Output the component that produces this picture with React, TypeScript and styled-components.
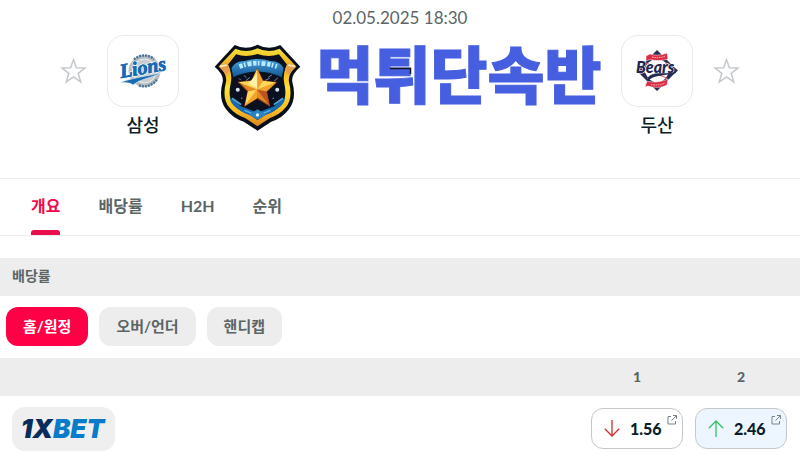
import React, { useState } from "react";
import styled, { createGlobalStyle } from "styled-components";

const sans = `Lato, "Noto Sans CJK KR", sans-serif`;

const GlobalStyle = createGlobalStyle`
  *, *::before, *::after { box-sizing: border-box; }
  body { margin: 0; background: #fff; color: #0b1e28; font-family: ${sans}; }
  button { font: inherit; border: 0; padding: 0; margin: 0; background: none; cursor: pointer; }
  h1, h2, p { margin: 0; }
  svg { display: block; }
`;

const MatchHeader = styled.header`
  min-height: 178px;
  padding: 8px 60px 0;
`;

const Kickoff = styled.time`
  display: block;
  text-align: center;
  font-size: 17px;
  line-height: 20px;
  color: #5b6566;
`;

const Matchup = styled.div`
  display: flex;
  align-items: flex-start;
  padding-top: 7px;
`;

const FavouriteButton = styled.button`
  margin-top: 23px;
`;

const Team = styled.div`
  display: flex;
  flex-direction: column;
  align-items: center;
  gap: 4px;
  margin: 0 20px;
`;

const TeamTile = styled.div`
  display: grid;
  place-items: center;
  width: 72px;
  height: 72px;
  border: 1px solid #e9eaea;
  border-radius: 17px;
`;

const TeamName = styled.p`
  font-size: 18px;
  line-height: 28px;
  font-weight: 500;
`;

const Banner = styled.div`
  flex: 1;
  display: flex;
  justify-content: center;
  gap: 15px;
  padding: 9px 0 0 16px;
  margin: 0 -20px;
`;

const BannerTitle = styled.h1`
  position: relative;
  font-size: 62px;
  line-height: 62px;
  font-weight: 900;
  color: #465fe0;
  -webkit-text-stroke: 1px #465fe0;
  white-space: nowrap;
`;

const BannerMark = styled.svg`
  position: absolute;
  left: 74px;
  top: 23px;
`;

const Tabs = styled.nav`
  display: flex;
  gap: 38px;
  padding: 0 31px;
  border-top: 1px solid #ebecec;
  border-bottom: 1px solid #ebecec;
`;

const Tab = styled.button<{ $active: boolean }>`
  position: relative;
  height: 56px;
  padding-bottom: 4px;
  font-size: 16px;
  font-weight: 700;
  color: ${(p) => (p.$active ? "#f5084b" : "#5b6566")};

  &::after {
    content: "";
    position: absolute;
    inset: auto 0 0;
    height: 5px;
    border-radius: 3px 3px 0 0;
    background: ${(p) => (p.$active ? "#e8104c" : "transparent")};
  }
`;

const SectionTitle = styled.h2`
  margin-top: 22px;
  padding: 0 12px 2px;
  font-size: 14px;
  line-height: 36px;
  font-weight: 700;
  color: #5b6566;
  background: #ededed;
`;

const Markets = styled.div`
  display: flex;
  gap: 11px;
  padding: 11px 6px 12px;
`;

const MarketButton = styled.button<{ $active: boolean }>`
  height: 39px;
  padding: 0 17px 3px;
  border-radius: 12px;
  font-size: 15px;
  font-weight: 700;
  color: ${(p) => (p.$active ? "#fff" : "#5b6566")};
  background: ${(p) => (p.$active ? "#ff0046" : "#ededed")};
`;

const OddsTable = styled.table`
  width: 100%;
  border-collapse: collapse;
  table-layout: fixed;
`;

const HeadRow = styled.tr`
  height: 38px;
  background: #ededed;
  color: #5b6566;
  font-size: 14px;
`;

const HeadCell = styled.th<{ $kind: "bookmaker" | "odd" | "last" }>`
  width: ${(p) => ({ bookmaker: "auto", odd: "104px", last: "111px" })[p.$kind]};
  padding: ${(p) => (p.$kind === "last" ? "0 13px 2px 6px" : "0 6px 2px")};
  font-weight: 900;
`;

const OddsRow = styled.tr`
  height: 65px;
`;

const Cell = styled.td<{ $last?: boolean; $first?: boolean }>`
  padding: ${(p) => (p.$last ? "0 13px 0 6px" : p.$first ? "0 12px" : "0 6px")};
`;

const Bookmaker = styled.a`
  display: flex;
  align-items: center;
  justify-content: center;
  width: 103px;
  height: 44px;
  padding-right: 2px;
  border-radius: 13px;
  background: #efefef;
  text-decoration: none;
  font: italic 900 26px/44px Inter, sans-serif;
  color: #087bc9;
`;

const BookmakerLead = styled.span`
  color: #082c5c;
`;

const OddButton = styled.button<{ $tinted: boolean }>`
  position: relative;
  display: flex;
  align-items: center;
  gap: 10px;
  width: 100%;
  height: 41px;
  padding-left: 12px;
  border: 1px solid #c4c8ca;
  border-radius: 12px;
  font-size: 16px;
  font-weight: 900;
  color: #0b1e28;
  background: ${(p) => (p.$tinted ? "#edf6ff" : "#fff")};
`;

const ExternalMark = styled.svg`
  position: absolute;
  top: 6px;
  right: 5px;
`;

function StarIcon() {
  return (
    <svg width="27" height="26" viewBox="0 0 27 26" fill="none" stroke="#c3c8ca" strokeWidth="1.5" aria-hidden="true">
      <path d="M13.5 1.8 16.4 9.8 25 10.1 18.2 15.3 20.7 23.8 13.5 18.8 6.3 23.8 8.8 15.3 2 10.1 10.6 9.8Z" />
    </svg>
  );
}

function LionsLogo() {
  return (
    <svg width="48" height="40" viewBox="0 0 48 40" role="img" aria-label="Samsung Lions">
      <circle cx="25.5" cy="20" r="14" fill="#c9ccd0" stroke="#b6bbc1" strokeWidth="4" />
      <circle cx="25.5" cy="20" r="12" fill="none" stroke="#fff" strokeWidth=".7" />
      <path d="M15 8.5A15 15 0 0 1 35 8" fill="none" stroke="#47749d" strokeWidth="2.4" strokeDasharray="2 1" />
      <path d="M20 34.5A15 15 0 0 0 38 28" fill="none" stroke="#47749d" strokeWidth="2.4" strokeDasharray="2 1" />
      <text
        x="2"
        y="27"
        transform="rotate(-10 2 27)"
        fontFamily="Liberation Serif, serif"
        fontStyle="italic"
        fontWeight="700"
        fontSize="20"
        fill="#176bb3"
        stroke="#fff"
        strokeWidth="2"
        paintOrder="stroke"
      >
        Lions
      </text>
      <text
        x="2"
        y="27"
        transform="rotate(-10 2 27)"
        fontFamily="Liberation Serif, serif"
        fontStyle="italic"
        fontWeight="700"
        fontSize="20"
        fill="#176bb3"
        stroke="#176bb3"
        strokeWidth=".7"
      >
        Lions
      </text>
      <path d="M0 32C12 27 28 25 42 22 32 27 21 28 14 34 11 31.500 6 31 0 32Z" fill="#176bb3" stroke="#fff" strokeWidth=".5" />
    </svg>
  );
}

function BearsLogo() {
  return (
    <svg width="44" height="44" viewBox="0 0 44 44" role="img" aria-label="Doosan Bears">
      <path d="M22 1 25 4 39 18 43 21.500 39 25 25 39 22 42 19 39 5 25 1 21.500 5 18 19 4Z" fill="#272b55" />
      <path d="M22 7 36.500 21.500 22 36 7.500 21.500Z" fill="#fff" stroke="#a94d68" strokeWidth="1" />
      <circle cx="22" cy="21.500" r="11.500" fill="#fff" />
      <path d="M12 14C16 18 28 18 32 14M12 30C17 25 27 25 32 30" fill="none" stroke="#dd6274" strokeWidth="1.100" />
      <path d="M11 7 15 5C21 7 27 6 32 4L33 10C27 12 20 12 15 10.500L11 12Z" fill="#d92b43" stroke="#fff" strokeWidth=".5" />
      <path d="M17 8.200C22 9 26 8.500 30 7.400" stroke="#f5a9b3" strokeWidth="1.200" strokeDasharray="1.500 .8" fill="none" />
      <path d="M12 32C19 34 26 33 33 30L32 36C27 39 19 39 13 37L10 38Z" fill="#d92b43" stroke="#fff" strokeWidth=".5" />
      <path d="M16 35.500C21 36.500 26 36 30 34" stroke="#f5a9b3" strokeWidth="1.200" strokeDasharray="1.500 .8" fill="none" />
      <text
        x="1"
        y="24"
        fontFamily="Lato, sans-serif"
        fontStyle="italic"
        fontWeight="900"
        fontSize="16"
        fill="#20264f"
        stroke="#fff"
        strokeWidth="1.200"
        paintOrder="stroke"
      >
        Bears
      </text>
      <path d="M41 23.500C29 27 18 25 13 32 11 27 18 24 27 24.500 33 24.500 37 24 41 23.500Z" fill="#20264f" stroke="#20264f" strokeWidth=".6" />
    </svg>
  );
}

function ShieldLogo() {
  return (
    <svg width="87" height="87" viewBox="22 30 260 260" role="img" aria-label="배지">
      <defs>
        <linearGradient id="rim" x1="0" y1="0" x2="0" y2="1">
          <stop offset="0" stopColor="#f4df37" />
          <stop offset=".25" stopColor="#f1a91f" />
          <stop offset=".5" stopColor="#ffe22e" />
          <stop offset=".8" stopColor="#f8bd24" />
          <stop offset="1" stopColor="#dc8420" />
        </linearGradient>
        <linearGradient id="ribbon" x1="0" y1="0" x2="0" y2="1">
          <stop offset="0" stopColor="#4ba5df" />
          <stop offset="1" stopColor="#0e528f" />
        </linearGradient>
      </defs>
      <path d="M84 33Q118 50 152 32Q186 50 220 33L280 98Q252 122 256 143Q270 194 246 225Q226 252 193 262L152 289 111 262Q78 252 58 225Q34 194 48 143Q52 122 24 98Z" fill="#080f1a" />
      <path d="M86 44Q119 59 152 43Q185 59 218 44L268 97Q242 119 246 143Q259 194 236 220Q219 241 188 252L152 276 116 252Q85 241 68 220Q45 194 58 143Q62 119 36 97Z" fill="url(#rim)" />
      <path d="M88 61Q119 71 152 60Q185 71 216 61L240 91Q226 118 232 147Q242 190 223 212Q204 232 178 240L152 257 126 240Q100 232 81 212Q62 190 72 147Q78 118 64 91Z" fill="#0a1020" />
      <path d="M36 97 62 87 70 108 60 122ZM268 97 242 87 234 108 244 122Z" fill="#e89d4b" />
      <path d="M40 97 60 93M264 97 244 93" stroke="#fff1bb" strokeWidth="5" />
      <path d="M72 102Q82 80 112 79Q152 66 192 79Q222 80 232 102L226 132Q152 96 78 132Z" fill="url(#ribbon)" stroke="#071321" strokeWidth="4" />
      <path d="M98 97Q152 78 210 97" fill="none" stroke="#b8eaff" strokeWidth="14" strokeDasharray="10 4 5 6 12 5" />
      <path d="M97 133 102 138M112 124 119 131M184 130 195 122M202 141 213 131M117 140 129 130M174 139 188 133" stroke="#9ba6b5" strokeWidth="2.500" />
      <path d="M69 191Q84 198 102 216L142 231V247Q109 238 88 220 72 210 69 191ZM235 191Q220 198 202 216L162 231V247Q195 238 216 220 232 210 235 191Z" fill="#176bad" />
      <path d="M76 192 103 211M228 192 201 211M113 228 149 244M191 228 155 244" stroke="#54a9e3" strokeWidth="5" />
      <path d="M126 241 152 225 178 241 152 257Z" fill="#2b82bc" />
      <circle cx="152" cy="242" r="5" fill="#e7f6ff" />
      <path d="M151 104 168 140 208 145 179 172 188 215 151 192 114 215 123 172 95 144 135 140Z" fill="#e38a22" stroke="#8a3a15" strokeWidth="3" />
      <path d="M151 104 135 140 95 144 151 166ZM151 166 123 172 114 215ZM151 166 208 145 168 140Z" fill="#ffd85b" />
      <path d="M151 104V166L168 140ZM208 145 151 166 179 172ZM114 215 151 166V192Z" fill="#f2a32c" />
      <path d="M151 166 188 215 179 172Z" fill="#bd5420" />
      <path d="M125 147 151 119V163Z" fill="#fff2a8" />
      <circle cx="93" cy="167" r="6" fill="#d9e3ed" />
      <circle cx="211" cy="167" r="6" fill="#d9e3ed" />
      <circle cx="105" cy="192" r="2" fill="#8ca0b6" />
      <circle cx="199" cy="192" r="2" fill="#8ca0b6" />
    </svg>
  );
}

function TrendArrow({ direction }: { direction: "up" | "down" }) {
  const down = direction === "down";
  return (
    <svg width="16" height="17" viewBox="0 0 16 17" fill="none" stroke={down ? "#cf2e32" : "#32c463"} strokeWidth="1.300" aria-hidden="true">
      <path d={down ? "M8 0V16M.8 8.800 8 16 15.200 8.800" : "M8 17V1M.8 8.200 8 1 15.200 8.200"} />
    </svg>
  );
}

const tabs = ["개요", "배당률", "H2H", "순위"];
const markets = ["홈/원정", "오버/언더", "핸디캡"];
const odds: { value: string; direction: "up" | "down" }[] = [
  { value: "1.56", direction: "down" },
  { value: "2.46", direction: "up" },
];

export default function App() {
  const [tab, setTab] = useState(0);
  const [market, setMarket] = useState(0);

  return (
    <>
      <GlobalStyle />
      <MatchHeader>
        <Kickoff dateTime="2025-05-02T18:30">02.05.2025 18:30</Kickoff>
        <Matchup>
          <FavouriteButton aria-label="삼성 즐겨찾기">
            <StarIcon />
          </FavouriteButton>
          <Team>
            <TeamTile>
              <LionsLogo />
            </TeamTile>
            <TeamName>삼성</TeamName>
          </Team>
          <Banner>
            <ShieldLogo />
            <BannerTitle>
              먹튀단속반
              <BannerMark width="22" height="8" viewBox="0 0 22 8" fill="none" stroke="#101522" strokeWidth="1.500" aria-hidden="true">
                <path d="M0 1.500H20.500V7" />
              </BannerMark>
            </BannerTitle>
          </Banner>
          <Team>
            <TeamTile>
              <BearsLogo />
            </TeamTile>
            <TeamName>두산</TeamName>
          </Team>
          <FavouriteButton aria-label="두산 즐겨찾기">
            <StarIcon />
          </FavouriteButton>
        </Matchup>
      </MatchHeader>
      <Tabs>
        {tabs.map((label, i) => (
          <Tab key={label} $active={i === tab} onClick={() => setTab(i)}>
            {label}
          </Tab>
        ))}
      </Tabs>
      <main>
        <SectionTitle>배당률</SectionTitle>
        <Markets>
          {markets.map((label, i) => (
            <MarketButton key={label} $active={i === market} aria-pressed={i === market} onClick={() => setMarket(i)}>
              {label}
            </MarketButton>
          ))}
        </Markets>
        <OddsTable>
          <thead>
            <HeadRow>
              <HeadCell $kind="bookmaker" aria-label="북메이커" />
              <HeadCell $kind="odd">1</HeadCell>
              <HeadCell $kind="last">2</HeadCell>
            </HeadRow>
          </thead>
          <tbody>
            <OddsRow>
              <Cell $first>
                <Bookmaker href="#1xbet">
                  <BookmakerLead>1X</BookmakerLead>BET
                </Bookmaker>
              </Cell>
              {odds.map(({ value, direction }, i) => (
                <Cell key={value} $last={i === odds.length - 1}>
                  <OddButton $tinted={direction === "up"}>
                    <TrendArrow direction={direction} />
                    {value}
                    <ExternalMark width="10" height="10" viewBox="0 0 10 10" fill="none" stroke="#7b8387" strokeWidth="1" aria-hidden="true">
                      <path d="M4 1.500H1V9H8.500V6M6 .5H9.500V4M9.500 .5 4.500 5.500" />
                    </ExternalMark>
                  </OddButton>
                </Cell>
              ))}
            </OddsRow>
          </tbody>
        </OddsTable>
      </main>
    </>
  );
}
